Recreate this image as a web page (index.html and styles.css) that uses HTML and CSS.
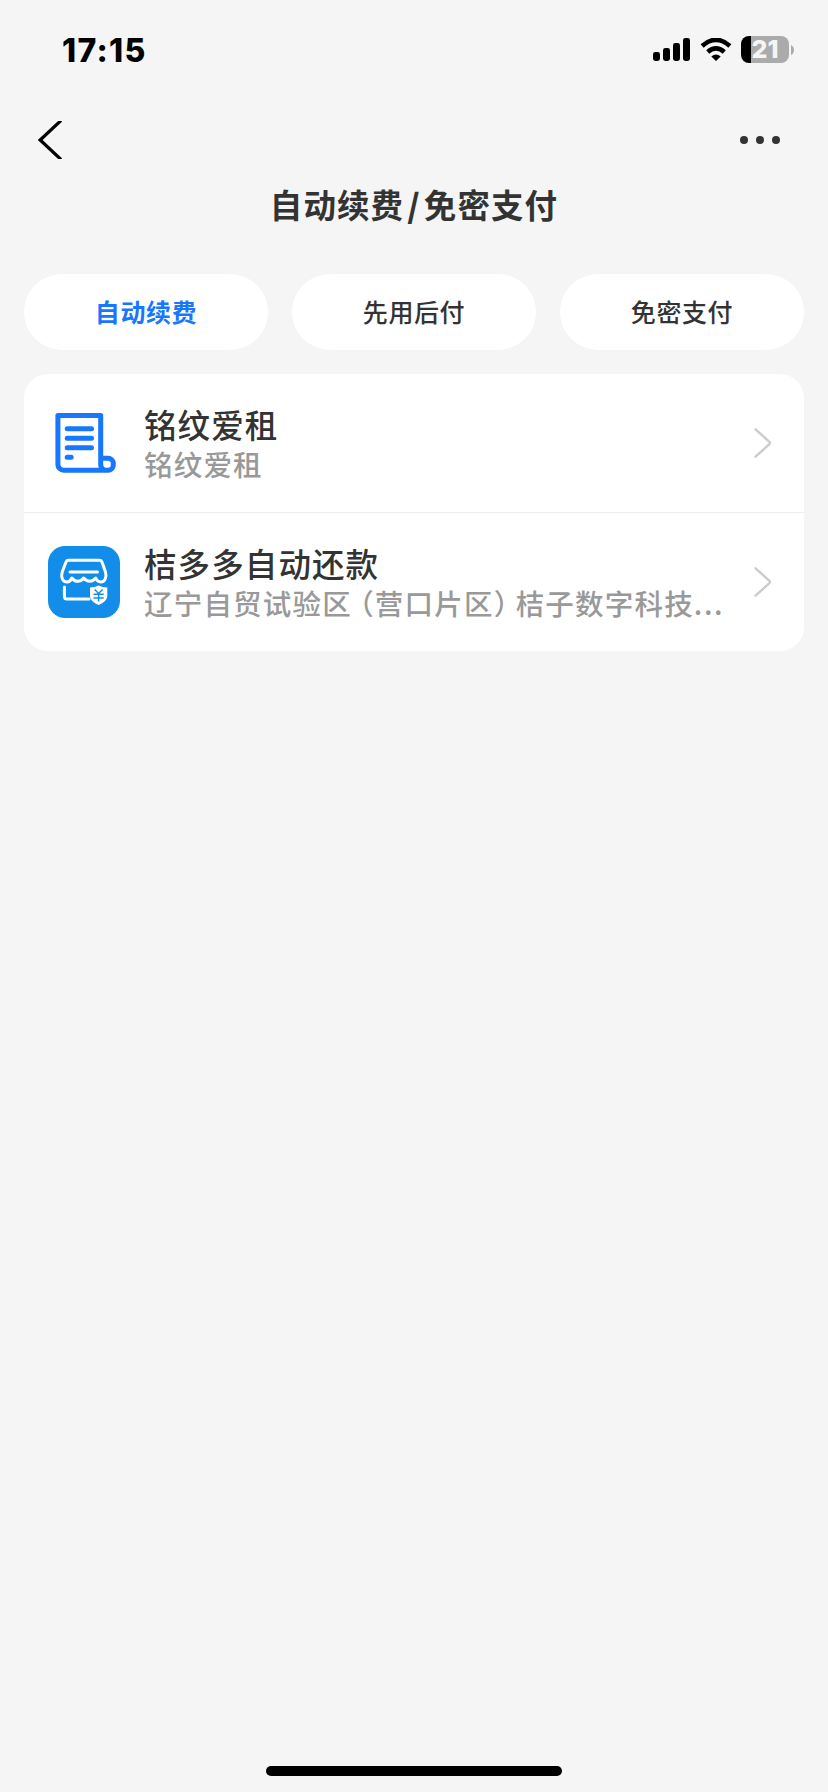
FILE: index.html
```html
<!DOCTYPE html>
<html lang="zh-CN">
<head>
<meta charset="utf-8">
<title>自动续费/免密支付</title>
<link rel="stylesheet" href="styles.css">
</head>
<body>
<div class="screen">
  <header class="status">
    <span class="time">17:15</span>
    <div class="indicators">
      <svg class="signal" width="38" height="24" viewBox="0 0 38 24">
        <rect x="0" y="14" width="7" height="9" rx="2.4"/><rect x="10" y="10" width="7" height="13" rx="2.4"/><rect x="20" y="5" width="7" height="18" rx="2.4"/><rect x="30" y="0" width="7" height="23" rx="2.4"/>
      </svg>
      <svg class="wifi" width="32" height="24" viewBox="0 0 32 24">
        <path d="M2.1 7.9Q16-4.2 29.9 7.900" fill="none" stroke="#000" stroke-width="4.6"/>
        <path d="M7.7 13.9Q16 7 24.3 13.9" fill="none" stroke="#000" stroke-width="4.6"/>
        <path d="M11.3 18.4Q16 14.8 20.7 18.4L16 23.1Z"/>
      </svg>
      <div class="battery"><span class="level">21</span></div>
      <svg class="cap" width="3" height="10" viewBox="0 0 3 10"><path d="M0 0Q3 1.5 3 5T0 10Z" fill="#ababab"/></svg>
    </div>
  </header>
  <nav class="nav">
    <svg class="back" width="24" height="38" viewBox="0 0 24 38"><path d="M23 -0.5L2.2 19L23 38.5" fill="none" stroke="#000" stroke-width="3.2"/></svg>
    <svg class="more" width="40" height="8" viewBox="0 0 40 8"><circle cx="4" cy="4" r="4"/><circle cx="20" cy="4" r="4"/><circle cx="36" cy="4" r="4"/></svg>
  </nav>
  <h1 class="title">自动续费<span class="slash">/</span>免密支付</h1>
  <div class="tabs">
    <div class="tab active">自动续费</div>
    <div class="tab">先用后付</div>
    <div class="tab">免密支付</div>
  </div>
  <main class="card">
    <div class="row">
      <svg class="logo" width="72" height="72" viewBox="0 0 72 72" fill="none" stroke="#1777ff" stroke-width="5" stroke-linecap="round" stroke-linejoin="round">
        <path d="M52.7 58V8.4H9.9V57.5a5.8 5.8 0 0 0 5.8 5.8H60a5.3 5.3 0 0 0 5.3-5.3V56.6a5.3 5.3 0 0 0-5.3-5.3H53M52.7 57Q52.7 63 58 63.3"/>
        <path d="M19.2 21.7H43.5M19.2 31.3H43.5M19.2 40.8H43.5M19.2 50.3H23.2"/>
      </svg>
      <div class="info"><div class="name">铭纹爱租</div><div class="sub">铭纹爱租</div></div>
      <svg class="arrow" width="18" height="30" viewBox="0 0 18 30"><path d="M1.5 1.3L15.4 13.8Q16.6 15 15.4 16.2L1.5 28.7"/></svg>
    </div>
    <div class="row">
      <svg class="logo" width="72" height="72" viewBox="0 0 72 72">
        <rect width="72" height="72" rx="17" fill="#128eea"/>
        <g fill="none" stroke="#fff" stroke-width="3" stroke-linecap="round" stroke-linejoin="round">
          <path d="M20.500 14.300H51.500Q53.200 14.300 53.900 15.800L57.500 26C59 31.500 56.500 36 53 36Q49.500 36 47.700 32Q45 35.300 41.700 35.300Q38.500 35.300 35.700 32Q33 35.300 29.700 35.300Q26.500 35.300 23.900 32Q22 36 18.800 36C15 36 12.500 31.500 14.200 26L18.100 15.800Q18.800 14.300 20.500 14.300ZM22 26H49.500"/>
          <path d="M16.400 41V50.500Q16.400 52.900 18.800 52.900H41"/>
        </g>
        <path d="M50.600 39.500Q54.500 41.500 59.300 41.500V50.500Q58.500 56 50.600 59Q42.700 56 42 50.500V41.500Q46.700 41.500 50.600 39.500Z" fill="#fff"/>
        <path d="M46.700 43.500L50.600 47.500L54.500 43.500M50.600 47.500V55.500M45.500 48.300H55.700M45.500 52H55.700" fill="none" stroke="#128eea" stroke-width="1.500"/>
      </svg>
      <div class="info"><div class="name">桔多多自动还款</div><div class="sub">辽宁自贸试验区<span class="open">（</span>营口片区<span class="close">）</span>桔子数字科技<span class="dots">...</span></div></div>
      <svg class="arrow" width="18" height="30" viewBox="0 0 18 30"><path d="M1.5 1.3L15.4 13.8Q16.6 15 15.4 16.2L1.5 28.7"/></svg>
    </div>
  </main>
  <div class="home"></div>
</div>
</body>
</html>
```
FILE: styles.css
```css
* { box-sizing: border-box; }
body { margin: 0; background: #f5f5f5; font-family: "Noto Sans CJK SC", sans-serif; color: #333; }
.screen { width: 828px; height: 1792px; display: flex; flex-direction: column; overflow: hidden; }
.status { height: 100px; display: flex; justify-content: space-between; padding: 30px 34px 0 62px; }
.time { font: 800 32px/41px Inter, sans-serif; color: #000; letter-spacing: 1.3px; }
.indicators { display: flex; height: 40px; align-items: center; }
.signal { margin-right: 9px; }
.wifi { margin-right: 9px; }
.battery { width: 48px; height: 27px; margin-top: -1px; border-radius: 8px; background: linear-gradient(90deg, #000 10px, #ababab 10px); text-align: center; }
.level { font: 800 25px/27px Inter, sans-serif; color: #f5f5f5; display: block; }
.cap { margin: -1px 0 0 2px; }
.nav { height: 80px; display: flex; justify-content: space-between; align-items: center; padding: 0 48px 0 38px; }
.more { fill: #333; }
.title { margin: 0; height: 52px; line-height: 48px; text-align: center; font-size: 32.5px; font-weight: 700; letter-spacing: 1.1px; }
.slash { padding: 0 3px; font-weight: 900; }
.tabs { display: grid; grid-template-columns: repeat(3, 1fr); gap: 24px; padding: 0 24px; margin-top: 42px; }
.tab { height: 76px; border-radius: 38px; background: #fff; text-align: center; line-height: 74px; font-size: 25px; font-weight: 500; letter-spacing: .6px; }
.active { color: #1777ff; font-weight: 700; }
.card { margin: 24px 24px 0; background: #fff; border-radius: 24px; }
.row { height: 138px; display: flex; align-items: center; padding: 0 32px 0 24px; }
.row + .row { border-top: 1px solid #eee; height: 139px; }
.logo { flex: none; margin-right: 24px; }
.info { flex: 1; white-space: nowrap; padding-top: 1px; }
.name { font-size: 32.5px; line-height: 40px; font-weight: 500; letter-spacing: 1.1px; }
.sub { font-size: 28.5px; line-height: 40px; font-weight: 500; color: #999; letter-spacing: 1.2px; }
.open, .close { font-feature-settings: "halt"; }
.open { margin-left: 7.5px; }
.close { margin-right: 6.5px; }
.dots { letter-spacing: 1.6px; }
.arrow { flex: none; fill: none; stroke: #ccc; stroke-width: 2.4; stroke-linecap: round; }
.home { width: 296px; height: 10px; border-radius: 5px; background: #000; margin: auto auto 16px; }
```
